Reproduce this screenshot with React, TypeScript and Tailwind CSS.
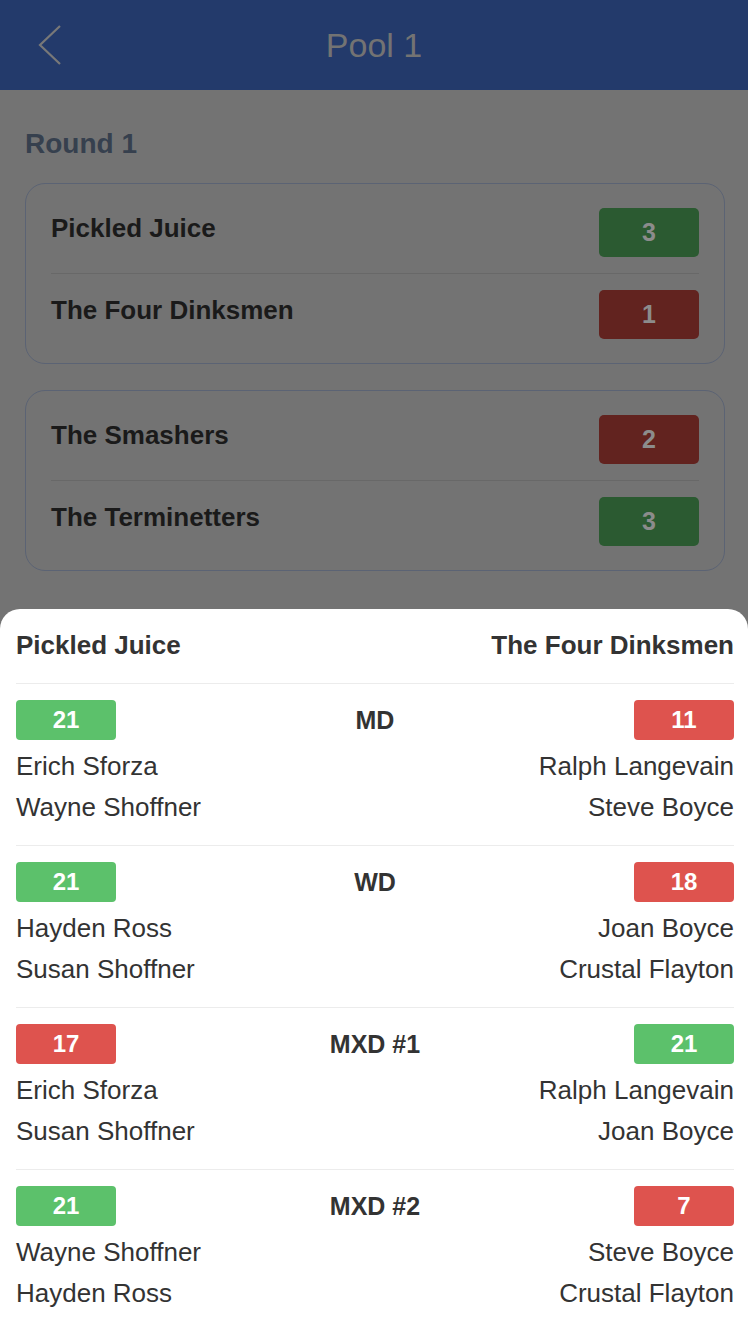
import React from "react";

type Row = { name: string; score: number; win: boolean };
const cards: Row[][] = [
  [
    { name: "Pickled Juice", score: 3, win: true },
    { name: "The Four Dinksmen", score: 1, win: false },
  ],
  [
    { name: "The Smashers", score: 2, win: false },
    { name: "The Terminetters", score: 3, win: true },
  ],
];

type Match = {
  label: string;
  left: number;
  right: number;
  leftNames: [string, string];
  rightNames: [string, string];
};

const matches: Match[] = [
  { label: "MD", left: 21, right: 11, leftNames: ["Erich Sforza", "Wayne Shoffner"], rightNames: ["Ralph Langevain", "Steve Boyce"] },
  { label: "WD", left: 21, right: 18, leftNames: ["Hayden Ross", "Susan Shoffner"], rightNames: ["Joan Boyce", "Crustal Flayton"] },
  { label: "MXD #1", left: 17, right: 21, leftNames: ["Erich Sforza", "Susan Shoffner"], rightNames: ["Ralph Langevain", "Joan Boyce"] },
  { label: "MXD #2", left: 21, right: 7, leftNames: ["Wayne Shoffner", "Hayden Ross"], rightNames: ["Steve Boyce", "Crustal Flayton"] },
];

function Badge({ value, win }: { value: number; win: boolean }) {
  return (
    <div
      className={
        "w-[100px] h-[40px] rounded-[4px] flex items-center justify-center text-white font-bold text-[24px] leading-[40px] " +
        (win ? "bg-[#5cc16b]" : "bg-[#de534e]")
      }
    >
      {value}
    </div>
  );
}

export default function App() {
  return (
    <div
      className="relative w-[748px] h-[1324px] overflow-hidden bg-[#737373]"
      style={{ fontFamily: '"Liberation Sans", Arial, Helvetica, sans-serif' }}
    >
      {/* Header */}
      <div className="relative h-[90px] bg-[#233a6b] flex items-center justify-center">
        <button className="absolute left-[34px] top-[23px] w-[30px] h-[44px] flex items-center justify-center">
          <svg width="26" height="42" viewBox="0 0 26 42" fill="none">
            <path d="M24 2 L4 21 L24 40" stroke="#787878" strokeWidth="2.2" strokeLinecap="butt" strokeLinejoin="miter" />
          </svg>
        </button>
        <div className="text-[34px] text-[#737373] leading-[40px]">Pool 1</div>
      </div>

      {/* Content */}
      <div className="pl-[25px] pr-[23px] pt-[37px]">
        <div className="text-[28px] font-bold leading-[34px] text-[#36404e] mb-[22px]">Round 1</div>
        <div className="flex flex-col gap-[26px]">
          {cards.map((card, ci) => (
            <div key={ci} className="border border-[#5b6374] rounded-[20px] px-[25px] py-[8px]">
              {card.map((r, ri) => (
                <div
                  key={ri}
                  className={
                    "flex items-center justify-between py-[16px] " +
                    (ri === 0 ? "border-b border-[#686868]" : "")
                  }
                >
                  <span className="text-[26px] font-bold text-[#1a1a1a] leading-[32px] mb-[9px]">{r.name}</span>
                  <div
                    className={
                      "w-[100px] h-[49px] rounded-[5px] flex items-center justify-center font-bold text-[25px] text-[#8c8c8c] " +
                      (r.win ? "bg-[#2b5a31]" : "bg-[#62231f]")
                    }
                  >
                    {r.score}
                  </div>
                </div>
              ))}
            </div>
          ))}
        </div>
      </div>

      {/* Bottom sheet */}
      <div className="absolute left-0 right-0 top-[609px] bottom-0 bg-white rounded-t-[20px] pl-[16px] pr-[14px] text-[#333333]">
        <div className="flex justify-between items-center pt-[18px] pb-[20px] border-b border-[#ececec] text-[26px] font-bold leading-[36px]">
          <span>Pickled Juice</span>
          <span>The Four Dinksmen</span>
        </div>
        {matches.map((m, i) => (
          <div key={i} className="grid grid-cols-3 pt-[16px] pb-[17px] border-b border-[#ececec]">
            <div className="flex flex-col items-start">
              <Badge value={m.left} win={m.left > m.right} />
              <div className="mt-[6px] text-[26px] leading-[41px] whitespace-nowrap">{m.leftNames[0]}</div>
              <div className="text-[26px] leading-[41px] whitespace-nowrap">{m.leftNames[1]}</div>
            </div>
            <div className="text-center text-[25px] font-bold leading-[40px]">{m.label}</div>
            <div className="flex flex-col items-end">
              <Badge value={m.right} win={m.right > m.left} />
              <div className="mt-[6px] text-[26px] leading-[41px] whitespace-nowrap">{m.rightNames[0]}</div>
              <div className="text-[26px] leading-[41px] whitespace-nowrap">{m.rightNames[1]}</div>
            </div>
          </div>
        ))}
      </div>
    </div>
  );
}
